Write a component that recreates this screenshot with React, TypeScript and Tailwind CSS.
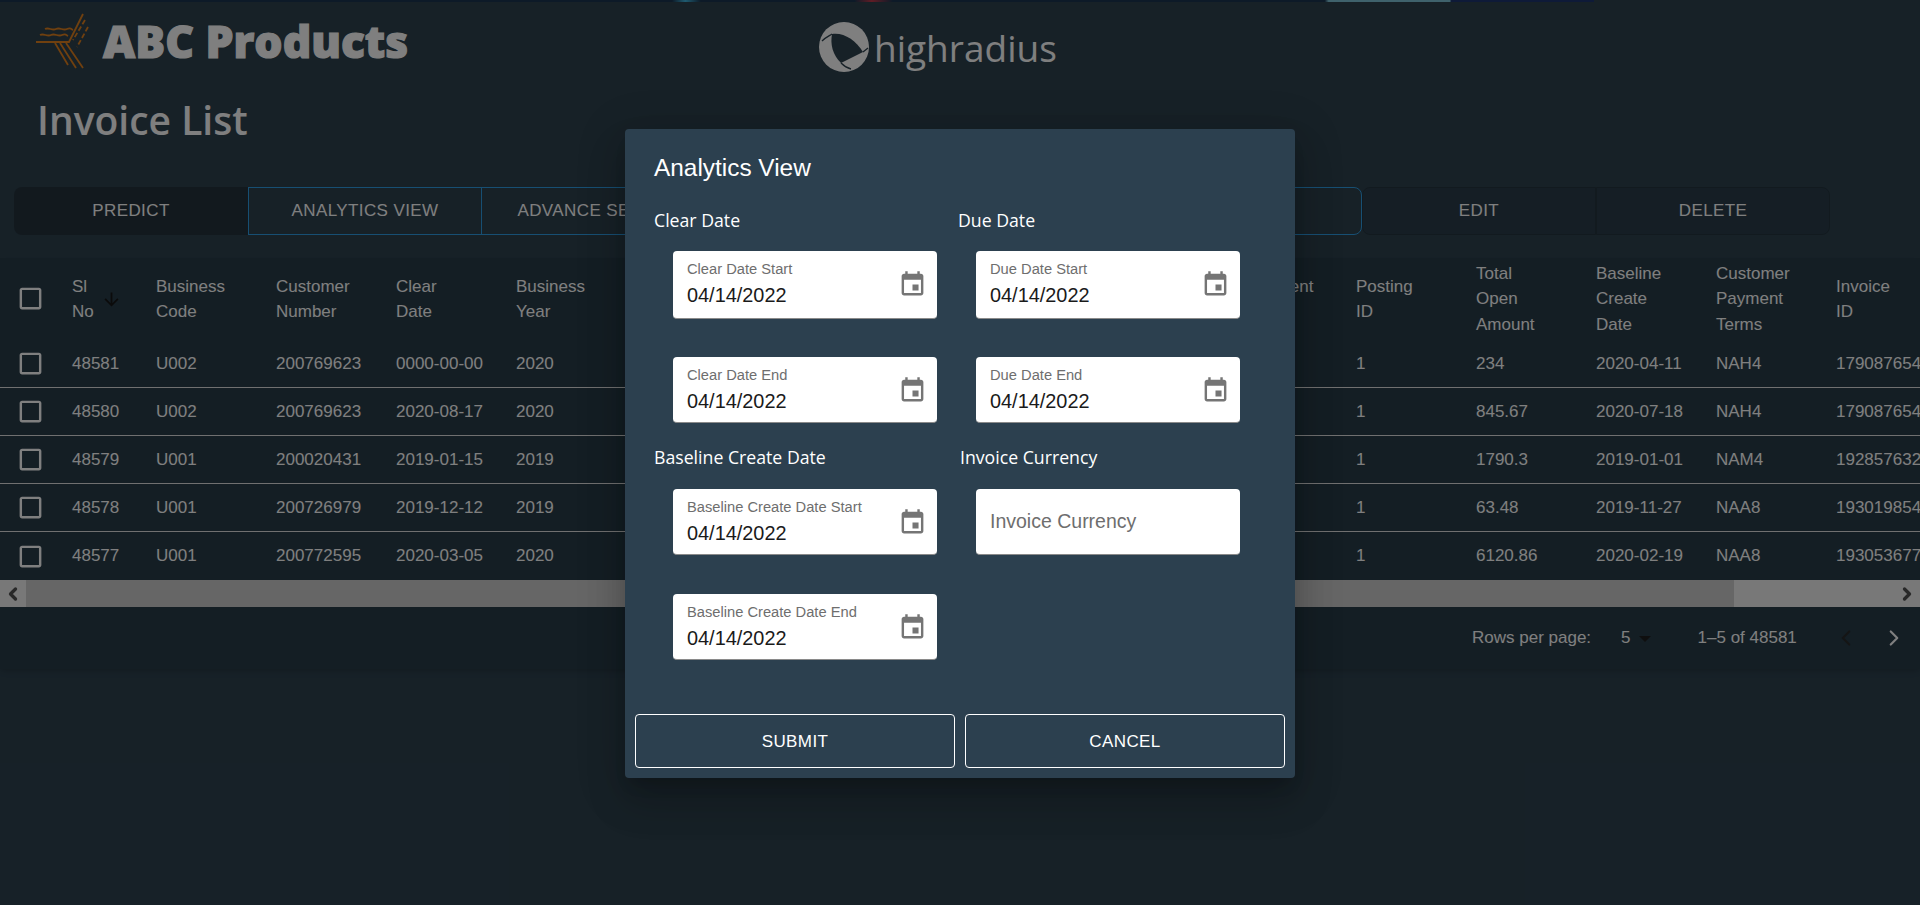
import { ChevronLeft, ChevronRight } from 'lucide-react';

const sans = 'font-["Liberation_Sans",Arial,sans-serif]';
const ui = 'font-["Open_Sans","Noto_Sans",sans-serif]';

interface Column {
  label: string[];
  key: string;
}

const columns: Column[] = [
  { label: ['Business', 'Code'], key: 'businessCode' },
  { label: ['Customer', 'Number'], key: 'customer' },
  { label: ['Clear', 'Date'], key: 'clearDate' },
  { label: ['Business', 'Year'], key: 'year' },
  { label: [], key: 'h1' },
  { label: [], key: 'h2' },
  { label: [], key: 'h3' },
  { label: [], key: 'h4' },
  { label: [], key: 'h5' },
  { label: ['Document', 'Type'], key: 'h6' },
  { label: ['Posting', 'ID'], key: 'postingId' },
  { label: ['Total', 'Open', 'Amount'], key: 'total' },
  { label: ['Baseline', 'Create', 'Date'], key: 'baseline' },
  { label: ['Customer', 'Payment', 'Terms'], key: 'terms' },
  { label: ['Invoice', 'ID'], key: 'invoiceId' },
];

const rows: Record<string, string>[] = [
  { sl: '48581', businessCode: 'U002', customer: '200769623', clearDate: '0000-00-00', year: '2020', postingId: '1', total: '234', baseline: '2020-04-11', terms: 'NAH4', invoiceId: '179087654' },
  { sl: '48580', businessCode: 'U002', customer: '200769623', clearDate: '2020-08-17', year: '2020', postingId: '1', total: '845.67', baseline: '2020-07-18', terms: 'NAH4', invoiceId: '179087654' },
  { sl: '48579', businessCode: 'U001', customer: '200020431', clearDate: '2019-01-15', year: '2019', postingId: '1', total: '1790.3', baseline: '2019-01-01', terms: 'NAM4', invoiceId: '192857632' },
  { sl: '48578', businessCode: 'U001', customer: '200726979', clearDate: '2019-12-12', year: '2019', postingId: '1', total: '63.48', baseline: '2019-11-27', terms: 'NAA8', invoiceId: '193019854' },
  { sl: '48577', businessCode: 'U001', customer: '200772595', clearDate: '2020-03-05', year: '2020', postingId: '1', total: '6120.86', baseline: '2020-02-19', terms: 'NAA8', invoiceId: '193053677' },
];

function CheckBox() {
  return (
    <svg width="29" height="29" viewBox="0 0 24 24" className="fill-white">
      <path d="M19 5v14H5V5h14m0-2H5c-1.1 0-2 .9-2 2v14c0 1.1.9 2 2 2h14c1.1 0 2-.9 2-2V5c0-1.1-.9-2-2-2z" />
    </svg>
  );
}

function CalendarIcon() {
  return (
    <svg width="29" height="29" viewBox="0 0 24 24" className="fill-[#757575]">
      <path d="M17 12h-5v5h5v-5zM16 1v2H8V1H6v2H5c-1.11 0-1.99.9-1.99 2L3 19c0 1.1.89 2 2 2h14c1.1 0 2-.9 2-2V5c0-1.1-.9-2-2-2h-1V1h-2zm3 18H5V8h14v11z" />
    </svg>
  );
}

function AbcLogo() {
  return (
    <svg width="54" height="56" viewBox="0 0 54 56" fill="none" className="stroke-[#e0801e] shrink-0" strokeWidth="1.8">
      <path d="M47 1 33 29H0" />
      <path d="M49 7 37 27M52 14 41 34" strokeDasharray="5 2.5" />
      <path d="M9 16c4-2 7 2 11 0s7 2 11 0 4 0 6 1M4 22c4-2 7 2 11 0s7 2 11 0 4 0 6 1" />
      <path d="M19 30 32 52M24 30 40 55M30 30 47 55" />
    </svg>
  );
}

function HighRadiusLogo() {
  return (
    <svg width="50" height="50" viewBox="0 0 50 50" className="fill-white shrink-0">
      <circle cx="25" cy="25" r="25" />
      <path className="fill-[#2e424f]" d="M13 12C24 10 37 18 44 30L22 41C14 33 11 23 13 12Z" />
      <path className="stroke-[#2e424f]" strokeWidth="1.3" fill="none" d="M3 19C7 15 10 14 13 12M22 41C25 44 28 46 32 47M44 30 49 26" />
    </svg>
  );
}

function DateField({ label, tall }: { label: string; tall?: boolean }) {
  return (
    <div className={`flex w-[264px] items-start justify-between rounded bg-white border-b border-[#8a8a8a] pl-[14px] pr-[10px] ${tall ? 'h-[68px]' : 'h-[66px]'} ${sans}`}>
      <div>
        <div className="mt-[10px] text-[14.7px] leading-[17px] text-[#6e6e6e]">{label}</div>
        <div className="mt-[5px] text-[19.9px] leading-[24px] text-[#1a1a1a]">04/14/2022</div>
      </div>
      <div className="mt-[19px]">
        <CalendarIcon />
      </div>
    </div>
  );
}

function ToolbarButton({ children, className }: { children?: React.ReactNode; className: string }) {
  return (
    <button className={`h-12 w-[234px] shrink-0 text-[17px] tracking-[0.4px] text-white ${className}`}>
      {children}
    </button>
  );
}

export default function App() {
  return (
    <div className={`relative h-[905px] overflow-hidden bg-[#2e424f] ${sans}`}>
      <div className="h-[2px] bg-[linear-gradient(90deg,#1a3550_0%,#1a3550_35%,#3fb6e0_35.7%,#1a3550_36.5%,#1a3550_44.5%,#c0394b_45.4%,#1a3550_46.5%,#1a3550_69%,#7fc4d8_69.2%,#7fc4d8_75.5%,#1c3470_75.6%,#1c3470_83%,#2e424f_83%)]" />

      <header className="flex h-[68px] items-start pl-9">
        <div className="mt-[11px] flex w-[783px] items-center">
          <AbcLogo />
          <span className={`ml-[13px] text-[44.4px] leading-none font-extrabold text-white [-webkit-text-stroke:1.2px_white] ${ui}`}>ABC Products</span>
        </div>
        <div className="mt-[20px] flex items-center">
          <HighRadiusLogo />
          <span className={`ml-[5px] text-[37px] leading-none font-normal text-white ${ui}`}>highradius</span>
        </div>
      </header>

      <h1 className={`mt-[25px] pl-[37px] text-[39px] leading-[50px] font-semibold text-white ${ui}`}>Invoice List</h1>

      <div className="mt-[42px] flex pl-[14px]">
        <ToolbarButton className="rounded-l-lg bg-[#25333d]">PREDICT</ToolbarButton>
        <ToolbarButton className="border border-[#2e9fe6]">ANALYTICS VIEW</ToolbarButton>
        <ToolbarButton className="border-y border-r border-[#2e9fe6]">ADVANCE SEARCH</ToolbarButton>
        <div className="h-12 w-[412px] shrink-0 border-y border-[#2e9fe6]" />
        <ToolbarButton className="rounded-r-lg border border-[#2e9fe6]">ADD</ToolbarButton>
        <ToolbarButton className="rounded-l-lg border border-[#25353f] bg-[#2a3d4a]">EDIT</ToolbarButton>
        <ToolbarButton className="rounded-r-lg border border-[#25353f] bg-[#2a3d4a]">DELETE</ToolbarButton>
      </div>

      <div className="mt-[23px] h-[411px] overflow-hidden bg-[#283c49] shadow-md">
        <table className="w-[1956px] table-fixed border-separate border-spacing-0 text-left text-[17px] leading-[25.5px] text-white">
          <thead>
            <tr className="h-[82px]">
              <th className="w-[72px] pb-[2px] pl-4 font-normal">
                <CheckBox />
              </th>
              <th className="w-[84px] font-normal">
                <div className="flex items-center">
                  <span>Sl<br />No</span>
                  <svg width="21" height="21" viewBox="0 0 24 24" className="ml-[7px] fill-[#161616]">
                    <path d="M20 12l-1.41-1.41L13 16.17V4h-2v12.17l-5.58-5.59L4 12l8 8 8-8z" />
                  </svg>
                </div>
              </th>
              {columns.map((col) => (
                <th key={col.key} className="w-[120px] font-normal">
                  {col.label.map((line) => (
                    <div key={line}>{line}</div>
                  ))}
                </th>
              ))}
            </tr>
          </thead>
          <tbody>
            {rows.map((row, idx) => {
              const line = idx < rows.length - 1 ? 'border-b border-[#e0e0e0]' : '';
              return (
                <tr key={row.sl} className="h-12">
                  <td className={`pl-4 ${line}`}>
                    <CheckBox />
                  </td>
                  <td className={line}>{row.sl}</td>
                  {columns.map((col) => (
                    <td key={col.key} className={`whitespace-nowrap ${line}`}>{row[col.key]}</td>
                  ))}
                </tr>
              );
            })}
          </tbody>
        </table>

        <div className="flex h-[27px] items-center bg-[#f1f1f1]">
          <div className="flex h-full w-[26px] items-center justify-center">
            <ChevronLeft size={20} strokeWidth={4} className="text-[#505050]" />
          </div>
          <div className="h-full w-[1708px] bg-[#cdcdcd]" />
          <div className="flex h-full flex-1 items-center justify-end pr-[3px]">
            <ChevronRight size={20} strokeWidth={4} className="text-[#505050]" />
          </div>
        </div>

        <div className="flex h-[62px] items-center pl-[1472px] text-[17px] text-white">
          <span>Rows per page:</span>
          <span className="ml-[30px]">5</span>
          <span className="ml-[8px] mt-[2px] h-0 w-0 border-x-[6px] border-t-[6px] border-x-transparent border-t-[#1e1e1e]" />
          <span className="ml-[47px]">1–5 of 48581</span>
          <ChevronLeft size={26} strokeWidth={2} className="ml-[36px] text-[#2a2a2a]" />
          <ChevronRight size={26} strokeWidth={2} className="ml-[22px] text-white" />
        </div>
      </div>

      {/* dialog */}
      <div className="absolute inset-0 flex items-center justify-center bg-black/50">
        <div className="mt-[2px] h-[649px] w-[670px] rounded bg-[#2c404f] px-[10px] shadow-[0_11px_15px_-7px_rgba(0,0,0,0.2),0_24px_38px_3px_rgba(0,0,0,0.14),0_9px_46px_8px_rgba(0,0,0,0.12)]">
          <h2 className="pl-[19px] pt-[22px] text-[24.4px] leading-[34px] text-white">Analytics View</h2>

          <div className={`mt-[21px] flex h-[28px] items-center pl-[19px] text-[17.7px] text-white ${ui}`}>
            <span className="w-[304px]">Clear Date</span>
            <span>Due Date</span>
          </div>
          <div className="mt-[17px] flex gap-[39px] pl-[38px]">
            <DateField label="Clear Date Start" tall />
            <DateField label="Due Date Start" tall />
          </div>
          <div className="mt-[38px] flex gap-[39px] pl-[38px]">
            <DateField label="Clear Date End" />
            <DateField label="Due Date End" />
          </div>

          <div className={`mt-[20px] flex h-[28px] items-center pl-[19px] text-[17.7px] text-white ${ui}`}>
            <span className="w-[306px]">Baseline Create Date</span>
            <span>Invoice Currency</span>
          </div>
          <div className="mt-[18px] flex gap-[39px] pl-[38px]">
            <DateField label="Baseline Create Date Start" />
            <div className="flex h-[66px] w-[264px] items-center rounded border-b border-[#8a8a8a] bg-white pl-[14px] text-[19.5px] text-[#6e6e6e]">
              Invoice Currency
            </div>
          </div>
          <div className="mt-[39px] pl-[38px]">
            <DateField label="Baseline Create Date End" />
          </div>

          <div className="mt-[54px] flex gap-[10px]">
            <button className="h-[54px] w-[320px] rounded border border-white pt-px text-[17px] tracking-[0.4px] text-white">SUBMIT</button>
            <button className="h-[54px] w-[320px] rounded border border-white pt-px text-[17px] tracking-[0.4px] text-white">CANCEL</button>
          </div>
        </div>
      </div>
    </div>
  );
}
